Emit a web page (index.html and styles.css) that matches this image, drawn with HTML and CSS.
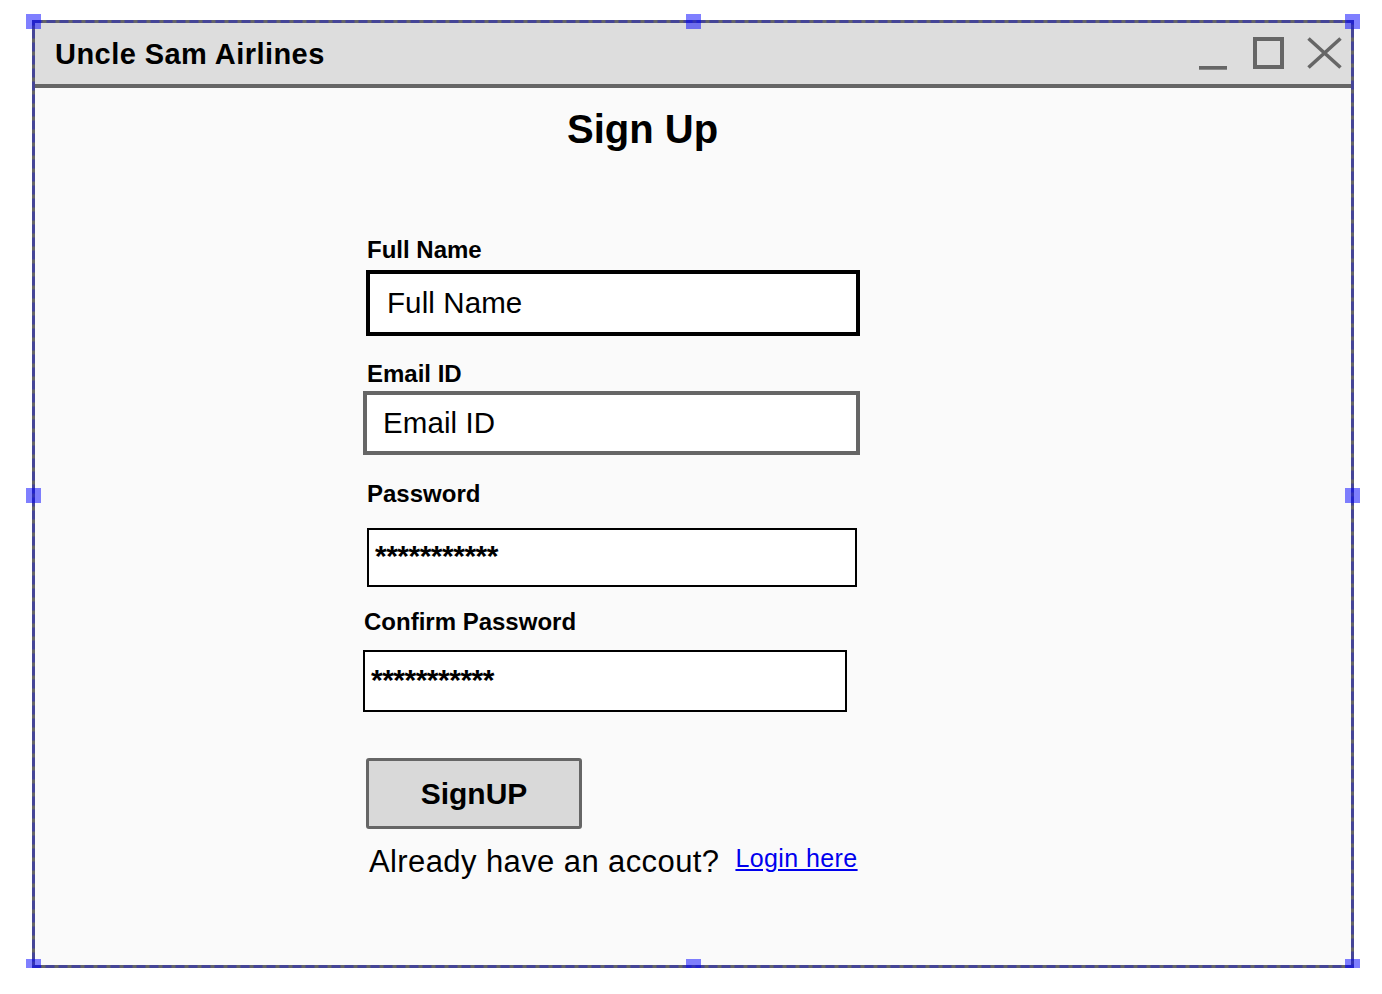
FILE: index.html
```html
<!DOCTYPE html>
<html lang="en">
<head>
<meta charset="utf-8">
<title>Uncle Sam Airlines - Sign Up</title>
<link rel="stylesheet" href="styles.css">
</head>
<body>
<div class="window">
  <div class="titlebar">
    <span class="title">Uncle Sam Airlines</span>
    <div class="controls">
      <svg class="ctl ctl-min" width="28" height="33" viewBox="0 0 28 33"><rect x="0" y="29" width="28" height="3.7" fill="#666"/></svg>
      <svg class="ctl ctl-max" width="31" height="32" viewBox="0 0 31 32"><rect x="2" y="2" width="27" height="28" fill="none" stroke="#666" stroke-width="4"/></svg>
      <svg class="ctl ctl-close" width="35" height="32" viewBox="0 0 35 32"><path d="M1.5 1.5 L33.5 30.5 M33.5 1.5 L1.5 30.5" stroke="#666" stroke-width="3.6" fill="none"/></svg>
    </div>
  </div>
  <div class="content">
    <h1 class="heading">Sign Up</h1>
    <div class="form">
      <div class="label label-a">Full Name</div>
      <div class="field field-name">Full Name</div>
      <div class="label label-b">Email ID</div>
      <div class="field field-email">Email ID</div>
      <div class="label label-c">Password</div>
      <div class="field field-pass">***********</div>
      <div class="label label-d">Confirm Password</div>
      <div class="field field-confirm">***********</div>
      <button class="btn" type="button">SignUP</button>
      <div class="foot">
        <span class="already">Already have an accout?</span>
        <a class="login" href="#">Login here</a>
      </div>
    </div>
  </div>
  <div class="selection">
    <svg class="sel-outline" width="1322" height="948" viewBox="0 0 1322 948"><rect x="1.5" y="1.5" width="1319" height="945" fill="none" stroke="rgba(0,0,255,0.32)" stroke-width="3" stroke-dasharray="9 4"/></svg>
    <span class="handle h-tl"></span>
    <span class="handle h-tm"></span>
    <span class="handle h-tr"></span>
    <span class="handle h-ml"></span>
    <span class="handle h-mr"></span>
    <span class="handle h-bl"></span>
    <span class="handle h-bm"></span>
    <span class="handle h-br"></span>
  </div>
</div>
</body>
</html>
```

FILE: styles.css
```css
html, body {
  margin: 0;
  padding: 0;
  background: #ffffff;
}

body {
  font-family: "Liberation Sans", Arial, Helvetica, sans-serif;
  color: #000;
}

.window {
  position: relative;
  box-sizing: border-box;
  width: 1322px;
  height: 948px;
  margin: 20px 0 0 32px;
  border: 3px solid #666;
  background: #fafafa;
  display: flex;
  flex-direction: column;
}

.titlebar {
  box-sizing: border-box;
  height: 65px;
  flex: none;
  background: #dddddd;
  border-bottom: 4px solid #666;
  display: flex;
  align-items: center;
  justify-content: space-between;
  padding: 0 9px 0 20px;
}

.title {
  font-weight: 700;
  font-size: 29px;
  letter-spacing: 0.45px;
  line-height: 34px;
}

.controls {
  display: flex;
  align-items: flex-start;
}

.ctl {
  display: block;
}

.ctl-max {
  margin-left: 26px;
}

.ctl-close {
  margin-left: 23px;
}

.content {
  flex: 1;
  padding-top: 17px;
}

.heading {
  margin: 0 0 0 532px;
  font-weight: 700;
  font-size: 40px;
  line-height: 48px;
}

.form {
  margin: 83px 0 0 328px;
  display: flex;
  flex-direction: column;
  align-items: flex-start;
}

.label {
  font-weight: 700;
  font-size: 24px;
  line-height: 28px;
  height: 28px;
}

.label-a { margin-left: 4px; }
.label-b { margin-left: 4px; margin-top: 24px; }
.label-c { margin-left: 4px; margin-top: 25px; }
.label-d { margin-left: 1px; margin-top: 21px; }

.field {
  box-sizing: border-box;
  background: #ffffff;
  display: flex;
}

.field-name,
.field-email {
  align-items: center;
  font-size: 29.5px;
  letter-spacing: 0.1px;
  line-height: 32px;
}

.field-name {
  margin: 6px 0 0 3px;
  width: 494px;
  height: 66px;
  border: 4px solid #000;
  padding-left: 17px;
}

.field-email {
  margin: 3px 0 0 0;
  width: 497px;
  height: 64px;
  border: 4px solid #666;
  padding-left: 16px;
}

.field-pass,
.field-confirm {
  align-items: flex-start;
  border: 2px solid #000;
  font-weight: 700;
  font-size: 30px;
  line-height: 32px;
  letter-spacing: -0.5px;
  padding-left: 6px;
}

.field-pass {
  margin: 20px 0 0 4px;
  width: 490px;
  height: 59px;
  padding-top: 10px;
}

.field-confirm {
  margin: 14px 0 0 0;
  width: 484px;
  height: 62px;
  padding-top: 12px;
}

.btn {
  box-sizing: border-box;
  margin: 46px 0 0 3px;
  width: 216px;
  height: 71px;
  border: 3px solid #666;
  border-radius: 3px;
  background: #d9d9d9;
  font-family: "Liberation Sans", Arial, Helvetica, sans-serif;
  font-weight: 700;
  font-size: 30px;
  color: #000;
  padding: 0;
}

.foot {
  margin: 15px 0 0 6px;
  display: flex;
  align-items: flex-start;
}

.already {
  font-size: 31px;
  line-height: 36px;
  letter-spacing: 0.4px;
}

.login {
  margin-left: 16px;
  font-size: 25px;
  line-height: 28px;
  letter-spacing: 0.4px;
  color: #0000ee;
  text-decoration: underline;
}

.selection {
  position: absolute;
  left: -3px;
  top: -3px;
  width: 1322px;
  height: 948px;
  pointer-events: none;
}

.sel-outline {
  position: absolute;
  left: 0;
  top: 0;
}

.handle {
  position: absolute;
  width: 15px;
  height: 15px;
  background: rgba(0, 0, 255, 0.5);
}

.h-tl { left: -6px;    top: -6px; }
.h-tm { left: 654px;   top: -6px; }
.h-tr { left: 1313px;  top: -6px; }
.h-ml { left: -6px;    top: 468px; }
.h-mr { left: 1313px;  top: 468px; }
.h-bl { left: -6px;    top: 939px; }
.h-bm { left: 654px;   top: 939px; }
.h-br { left: 1313px;  top: 939px; }
```
